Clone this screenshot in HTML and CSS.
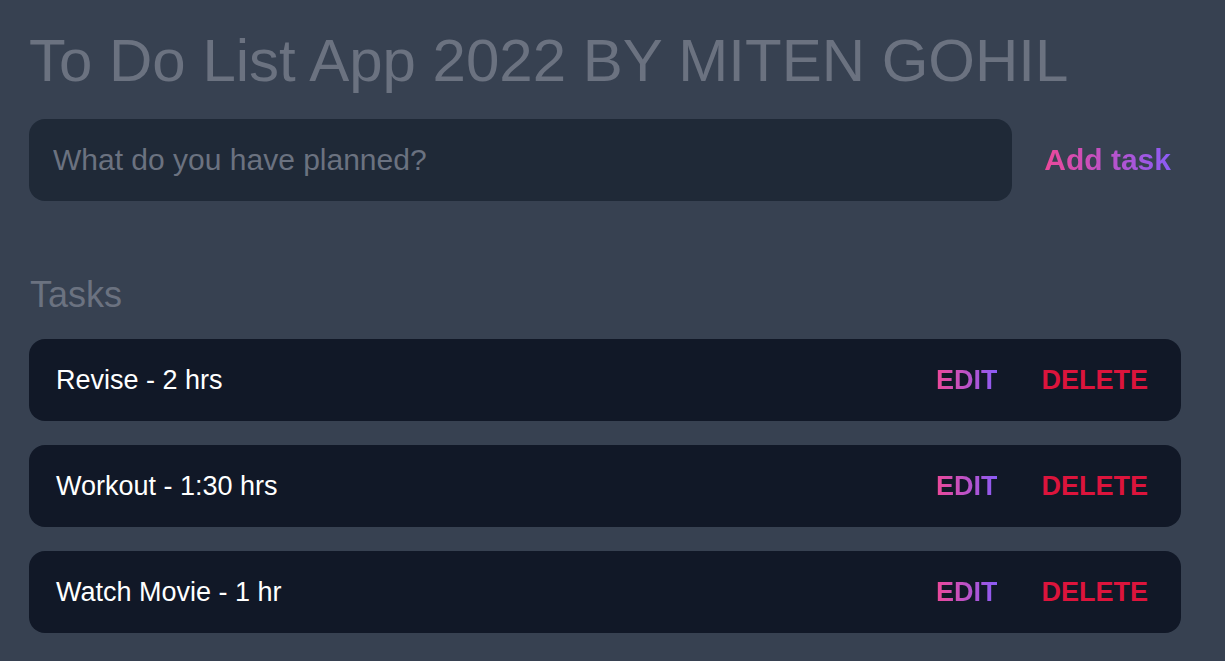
FILE: index.html
```html
<!DOCTYPE html>
<html lang="en">
<head>
<meta charset="utf-8">
<title>To Do List App</title>
<link rel="stylesheet" href="styles.css">
</head>
<body>
<main class="app">
  <h1 class="title">To Do List App 2022 BY MITEN GOHIL</h1>
  <form class="new-task" onsubmit="return false">
    <input class="new-task-input" type="text" placeholder="What do you have planned?">
    <button class="add-btn" type="submit"><span class="grad">Add task</span></button>
  </form>
  <section class="tasks">
    <h2 class="tasks-title">Tasks</h2>
    <div class="task-list">
      <div class="task">
        <span class="task-text">Revise - 2 hrs</span>
        <div class="actions">
          <button class="edit"><span class="grad">EDIT</span></button>
          <button class="delete">DELETE</button>
        </div>
      </div>
      <div class="task">
        <span class="task-text">Workout - 1:30 hrs</span>
        <div class="actions">
          <button class="edit"><span class="grad">EDIT</span></button>
          <button class="delete">DELETE</button>
        </div>
      </div>
      <div class="task">
        <span class="task-text">Watch Movie - 1 hr</span>
        <div class="actions">
          <button class="edit"><span class="grad">EDIT</span></button>
          <button class="delete">DELETE</button>
        </div>
      </div>
    </div>
  </section>
</main>
</body>
</html>
```

FILE: styles.css
```css
* { box-sizing: border-box; margin: 0; padding: 0; }
html, body { height: 100%; }
body {
  background: #374151;
  font-family: "Liberation Sans", Arial, sans-serif;
  color: #fff;
}
.app {
  padding: 31px 44px 0 29px;
}
.title {
  font-size: 60px;
  font-weight: 400;
  line-height: 60px;
  color: #6b7280;
}
.new-task {
  display: flex;
  align-items: center;
  gap: 22px;
  margin-top: 28px;
}
.new-task-input {
  flex: 1;
  height: 82px;
  border: none;
  outline: none;
  border-radius: 16px;
  background: #1f2937;
  padding: 0 24px;
  font-family: inherit;
  font-size: 30px;
  color: #fff;
}
.new-task-input::placeholder { color: #6b7280; }
.add-btn {
  background: none;
  border: none;
  font-family: inherit;
  font-size: 30px;
  font-weight: 700;
  padding: 0 10px;
  cursor: pointer;
}
.grad {
  background: linear-gradient(90deg, #ec4899, #8b5cf6);
  -webkit-background-clip: text;
  background-clip: text;
  color: transparent;
}
.tasks { margin-top: 74px; }
.tasks-title {
  font-size: 36px;
  font-weight: 400;
  line-height: 40px;
  color: #6b7280;
  padding-left: 1px;
}
.task-list {
  display: flex;
  flex-direction: column;
  gap: 24px;
  margin-top: 24px;
}
.task {
  display: flex;
  align-items: center;
  justify-content: space-between;
  height: 82px;
  background: #111827;
  border-radius: 16px;
  padding: 0 33px 0 27px;
}
.task-text {
  font-size: 27px;
  color: #fff;
}
.actions { display: flex; gap: 44px; }
.actions button {
  background: none;
  border: none;
  font-family: inherit;
  font-size: 27px;
  font-weight: 700;
  cursor: pointer;
}
.delete { color: #dc143c; }
```
